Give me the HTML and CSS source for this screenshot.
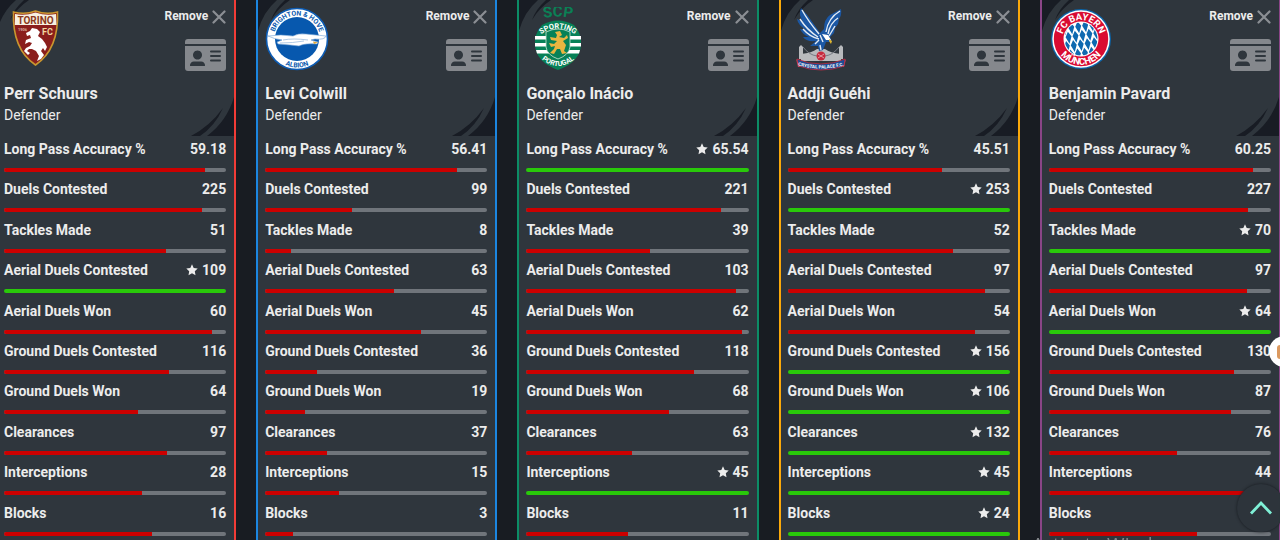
FILE: index.html
```html
<!DOCTYPE html>
<html lang="en">
<head>
<meta charset="utf-8">
<title>Player comparison</title>
<link rel="stylesheet" href="styles.css">
</head>
<body>
<svg width="0" height="0" class="defs" aria-hidden="true">
  <defs>
    <symbol id="close" viewBox="0 0 14 14"><path d="M1.500 1.500l11 11M12.500 1.500L1.500 12.500" fill="none" stroke="#8b8f94" stroke-width="2.200" stroke-linecap="round"/></symbol>
    <symbol id="idcard" viewBox="0 0 41 32">
      <path fill="#85888d" fill-rule="evenodd" d="M3 0H38a3 3 0 0 1 3 3V5H0V3A3 3 0 0 1 3 0ZM0 7H41V29a3 3 0 0 1-3 3H3a3 3 0 0 1-3-3ZM12.500 11.500a4.500 4.500 0 1 0 .01 0ZM5 27H20a4 4 0 0 0-4-4.500H9A4 4 0 0 0 5 27ZM26 11.500a1 1 0 0 0 0 2H35a1 1 0 0 0 0-2ZM26 16a1 1 0 0 0 0 2H35a1 1 0 0 0 0-2ZM26 20.500a1 1 0 0 0 0 2H35a1 1 0 0 0 0-2Z"/>
    </symbol>
    <symbol id="star" viewBox="0 0 12 12"><path fill="#ececec" d="M6 .3l1.700 3.600 4 .5-2.900 2.800.7 4L6 9.300l-3.500 1.900.7-4L.3 4.400l4-.5z"/></symbol>
    <symbol id="corner-tl" viewBox="0 0 40 40"><path fill="#181c24" d="M0 0H19Q5 12 0 31ZM27 0H32Q20 8 13 20Q17 9 27 0Z"/></symbol>
    <symbol id="corner-br" viewBox="0 0 44 40"><path fill="#181c24" d="M44 1V40H17Q37 25 44 1ZM33 12Q25 30 10 40H1Q20 30 33 12Z"/></symbol>

    <symbol id="torino" viewBox="0 0 64 64">
      <path d="M9.500 5Q21 8 31.500 4Q42 8 53.500 5Q55 42 31.500 58Q8 42 9.500 5Z" fill="#8a1e1c" stroke="#c9962f" stroke-width="1.600"/>
      <path d="M11 7Q21 9 31.500 5.500Q42 9 52 7L52.500 18H10.800Z" fill="#f7f0e0"/>
      <text x="31.500" y="17" text-anchor="middle" class="crest-text" font-size="10" fill="#8a3a1c">TORINO</text>
      <text x="43.500" y="28" text-anchor="middle" class="crest-text" font-size="9" fill="#f0d9a0">FC</text>
      <text x="18.500" y="24" text-anchor="middle" class="crest-text" font-size="4" fill="#d8b0a0">1906</text>
      <path fill="#fff" d="M26 24L28 21L33 22L36 25L34 29L38 32L41 36L43 40L41 44L39 41L37 44L40 48L37 52L33 54L35 49L32 44L28 42L25 42L23 44L26 46L24 48L20 44L22 41L26 39L28 36L25 35L21 37L22 33L27 31L26 28L23 29L22 26Z"/>
    </symbol>

    <symbol id="brighton" viewBox="0 0 64 64">
      <circle cx="32" cy="32" r="30.500" fill="#fff" stroke="#0d5cb4" stroke-width="1.600"/>
      <circle cx="32" cy="32" r="22" fill="#0758ae"/>
      <path id="br-top" d="M8.500 32a23.500 23.500 0 0 1 47 0" fill="none"/>
      <path id="br-bot" d="M3.500 32a28.500 28.500 0 0 0 57 0" fill="none"/>
      <text class="crest-text" font-size="6.800" fill="#0758ae" text-anchor="middle"><textPath href="#br-top" startOffset="50%">BRIGHTON &amp; HOVE</textPath></text>
      <text class="crest-text" font-size="6.800" fill="#0758ae" text-anchor="middle"><textPath href="#br-bot" startOffset="50%">ALBION</textPath></text>
      <path fill="#fff" stroke="#6fa0d4" stroke-width=".6" d="M3 29Q16 27 28 29Q33 26 41 27Q51 28 61 29Q60 33 50 32L46 33L53 35L52 37Q40 36 34 39L25 38L13 37L12 35L17 33Q9 32 3 29Z"/>
      <path fill="#e0a735" d="M48 34.500l5 1-4 1.500z"/>
      <path d="M18 33Q28 31 43 33M15 36Q28 36 39 34" fill="none" stroke="#8fb3da" stroke-width=".7"/>
    </symbol>

    <symbol id="sporting" viewBox="0 0 64 64">
      <path id="sp-scp" d="M12 12.500Q32 6.500 52 12.500" fill="none"/>
      <text class="crest-text" font-size="15" fill="#0b8055" text-anchor="middle"><textPath href="#sp-scp" startOffset="50%">SCP</textPath></text>
      <path fill="#078157" d="M16 18Q32 9 48 18Q56 27 55 38Q54 55 32 63Q10 55 9 38Q8 27 16 18Z"/>
      <path fill="#fff" d="M9 29H55V32.500H9ZM9 36H55V39.500H9ZM10 43H54L53 46.500H11Z"/>
      <path fill="#078157" stroke="#cce5d6" stroke-width=".8" d="M20 25Q32 19 44 25V40Q43 48 32 52Q21 48 20 40Z"/>
      <path fill="#e9b540" d="M29 25L34 24L36 28L33 30L38 31L41 28L42 31L37 34L40 38L38 44L41 46L36 47L34 42L31 42L28 47L24 46L28 42L29 39L25 40L23 36L28 37L31 34L25 33L24 30L30 31L31 28Z"/>
      <path id="sp-top" d="M14 28Q32 15 50 28" fill="none"/>
      <path id="sp-bot" d="M13 50Q32 68 51 50" fill="none"/>
      <text class="crest-text" font-size="7.500" fill="#fff" text-anchor="middle"><textPath href="#sp-top" startOffset="50%">SPORTING</textPath></text>
      <text class="crest-text" font-size="7" fill="#fff" text-anchor="middle"><textPath href="#sp-bot" startOffset="50%">PORTUGAL</textPath></text>
    </symbol>

    <symbol id="palace" viewBox="0 0 64 64">
      <path fill="#b8babd" d="M11 40L13 38L15 40V52H11ZM51 40L53 38L55 40V52H51ZM13 47Q24 46 29 42L37 42Q42 46 53 47V54H13Z"/>
      <path d="M15 40Q21 48 29 49M51 40Q45 48 37 49" fill="none" stroke="#777b84"/>
      <path fill="#1b57a4" d="M13 1Q20 8 25 16L32 26L36 22Q36 12 42 8L53 2Q54 8 51 12L50 17L47 21L46 26L42 30L44 35L38 35L35 43L31 44L30 39L22 39L28 34Q18 35 15 30L21 30Q14 27 12 22L18 23Q10 18 9 12L15 15Q10 7 13 1Z"/>
      <path d="M14 3Q20 14 31 27M12 12Q19 23 30 30M15 22Q22 30 31 32M52 4Q40 11 38 25M50 11Q42 16 40 27M47 19L41 29M32 28L35 35M32 38L33 43M27 37L31 33" fill="none" stroke="#e3ebf4" stroke-width="1.400"/>
      <path fill="#fff" d="M34 27L40 28L43 33L38 33Z"/><path fill="#e4b62b" d="M41 32l3 2-1 3-2-3z"/>
      <circle cx="33" cy="49" r="4.500" fill="#c7293d"/><path d="M30 47l6 4M36 47l-6 4" stroke="#eec2c7" stroke-width=".7"/>
      <path fill="#c94958" d="M8 52l2 8 5 0zM58 52l-2 8-5 0z"/>
      <path fill="#1b4c96" stroke="#c7293d" stroke-width=".8" d="M9 52Q20 57 33 57Q46 57 57 52L56 59Q45 63 33 63Q21 63 11 59Z"/>
      <path id="pa-rib" d="M9 58Q33 65 57 58" fill="none"/>
      <text class="crest-text" font-size="4.600" fill="#fff" text-anchor="middle"><textPath href="#pa-rib" startOffset="50%">CRYSTAL PALACE F.C.</textPath></text>
    </symbol>

    <symbol id="bayern" viewBox="0 0 64 64">
      <clipPath id="disc"><circle cx="32" cy="32" r="16.500"/></clipPath>
      <circle cx="32" cy="32" r="30" fill="#0b65aa"/>
      <circle cx="32" cy="32" r="28.700" fill="#fff"/>
      <circle cx="32" cy="32" r="27.200" fill="#d90b32"/>
      <circle cx="32" cy="32" r="17.500" fill="#fff"/>
      <g clip-path="url(#disc)"><g transform="rotate(-8 32 32)" fill="#0e69b0">
        <path d="M17 14l3 5-3 7-3-7zM24 14l3 5-3 7-3-7zM31 14l3 5-3 7-3-7zM38 14l3 5-3 7-3-7zM45 14l3 5-3 7-3-7zM20 23l3 5-3 7-3-7zM27 23l3 5-3 7-3-7zM34 23l3 5-3 7-3-7zM41 23l3 5-3 7-3-7zM48 23l3 5-3 7-3-7zM17 32l3 5-3 7-3-7zM24 32l3 5-3 7-3-7zM31 32l3 5-3 7-3-7zM38 32l3 5-3 7-3-7zM45 32l3 5-3 7-3-7zM20 41l3 5-3 7-3-7zM27 41l3 5-3 7-3-7zM34 41l3 5-3 7-3-7zM41 41l3 5-3 7-3-7z"/>
      </g></g>
      <path id="by-top" d="M13 32a19 19 0 0 1 38 0" fill="none"/>
      <path id="by-bot" d="M6.200 32a25.800 25.800 0 0 0 51.600 0" fill="none"/>
      <text class="crest-text" font-size="9.500" fill="#fff" text-anchor="middle"><textPath href="#by-top" startOffset="50%">FC BAYERN</textPath></text>
      <text class="crest-text" font-size="9.500" fill="#fff" text-anchor="middle"><textPath href="#by-bot" startOffset="50%">MÜNCHEN</textPath></text>
    </symbol>
  </defs>
</svg>

<main class="board" id="board"></main>

<button class="to-top" type="button" aria-label="Back to top"><svg viewBox="0 0 24 16" aria-hidden="true"><path d="M2 13.500L12 3L22 13.500" fill="none" stroke="#7ff0d6" stroke-width="2.800"/></svg></button>
<button class="helper" type="button" aria-label="Open helper"><span class="helper-face"></span></button>
<p class="watermark">Activate Windows</p>
<script src="app.js"></script>
</body>
</html>
```

FILE: styles.css
```css
* { box-sizing: border-box; }

body {
  margin: 0;
  background: #181c22;
  color: #ececec;
  font-family: Roboto, "Liberation Sans", sans-serif;
  font-size: 14px;
  overflow: hidden;
}

.defs { position: absolute; }
.crest-text { font-family: Roboto, "Liberation Sans", sans-serif; font-weight: 700; }

.board {
  display: grid;
  grid-template-columns: repeat(5, minmax(0, 1fr));
  gap: 20px;
  min-height: 100vh;
  margin: 0 -1px 0 -5px;
}

.card {
  display: flex;
  flex-direction: column;
  border: solid;
  border-width: 0 2px;
  background: #2f363d;
}
.card-red { border-color: #f23c37; }
.card-blue { border-color: #1c86e0; }
.card-green { border-color: #0c8c66; }
.card-amber { border-color: #fba90a; }
.card-purple { border-color: #8a4587; }

.card-head {
  position: relative;
  display: flex;
  flex-direction: column;
  height: 136px;
  padding: 7px 8px 0 7px;
}
.corner { position: absolute; }
.corner-tl { top: 0; left: 0; width: 40px; height: 40px; }
.corner-br { right: 0; bottom: 0; width: 44px; height: 40px; }

.head-row { position: relative; display: flex; justify-content: space-between; }
.crest { width: 64px; height: 64px; }
.actions { display: flex; flex-direction: column; align-items: flex-end; gap: 14px; }
.remove {
  display: flex;
  align-items: center;
  gap: 4px;
  padding: 1px 0 0;
  border: 0;
  background: none;
  color: inherit;
  font: 700 12px/17px Roboto, "Liberation Sans", sans-serif;
}
.remove svg { width: 14px; height: 14px; }
.profile { display: block; width: 41px; height: 32px; }
.profile svg { display: block; width: 100%; height: 100%; }

.name { position: relative; margin: 13px 0 0; font-size: 16px; line-height: 20px; font-weight: 700; }
.role { position: relative; margin: 1px 0 0; font-size: 14px; line-height: 20px; }

.stats {
  flex: 1;
  display: grid;
  grid-auto-rows: 1fr;
  margin: 0;
  padding: 0 8px 0 7px;
}
.stat {
  display: grid;
  grid-template-columns: 1fr auto;
  grid-template-rows: 26px 10px;
  font-weight: 700;
  line-height: 26px;
}
.stat dt, .stat dd { margin: 0; }
.stat .value { display: flex; align-items: center; gap: 4px; }
.star { width: 12px; height: 12px; }
.stat .track { grid-column: 1 / 3; align-self: end; height: 4px; border-radius: 2px; background: #70757b; overflow: hidden; }
.fill { height: 100%; background: #cc0000; }
.best .fill { background: #29c90a; }

.to-top {
  position: fixed;
  right: -5px;
  bottom: 8px;
  display: grid;
  place-items: center;
  width: 48px;
  height: 48px;
  padding: 0;
  border: 0;
  border-radius: 50%;
  background: #2d343b;
  box-shadow: 0 0 3px #15191e;
}
.to-top svg { width: 24px; height: 16px; }

.helper {
  position: fixed;
  right: -20px;
  top: 336px;
  display: flex;
  align-items: center;
  width: 31px;
  height: 31px;
  padding: 0 0 0 8px;
  border: 0;
  border-radius: 50%;
  background: #fff;
}
.helper-face { width: 14px; height: 14px; border-radius: 3px; background: #dc9a60; }

.watermark {
  position: fixed;
  left: 1032px;
  top: 532px;
  margin: 0;
  color: #83878b;
  font: 19px/24px "Open Sans", sans-serif;
  white-space: nowrap;
}
```

FILE: app.js
```js
const labels = ["Long Pass Accuracy %", "Duels Contested", "Tackles Made", "Aerial Duels Contested", "Aerial Duels Won",
  "Ground Duels Contested", "Ground Duels Won", "Clearances", "Interceptions", "Blocks"];

const players = [
  { name: "Perr Schuurs", crest: "torino", tone: "red", values: ["59.18", 225, 51, 109, 60, 116, 64, 97, 28, 16] },
  { name: "Levi Colwill", crest: "brighton", tone: "blue", values: ["56.41", 99, 8, 63, 45, 36, 19, 37, 15, 3] },
  { name: "Gonçalo Inácio", crest: "sporting", tone: "green", values: ["65.54", 221, 39, 103, 62, 118, 68, 63, 45, 11] },
  { name: "Addji Guéhi", crest: "palace", tone: "amber", values: ["45.51", 253, 52, 97, 54, 156, 106, 132, 45, 24] },
  { name: "Benjamin Pavard", crest: "bayern", tone: "purple", values: ["60.25", 227, 70, 97, 64, 130, 87, 76, 44, 16] }
];

const best = labels.map((_, i) => Math.max(...players.map(p => Number(p.values[i]))));
const icon = (id, cls) => `<svg class="${cls}" aria-hidden="true"><use href="#${id}"/></svg>`;

function statRow(label, value, i, hideValue) {
  const share = Number(value) / best[i] * 100;
  const top = share === 100;
  return `<div class="stat ${top ? "best" : ""}"><dt>${label}</dt>
    <dd class="value">${top ? icon("star", "star") : ""}${hideValue ? "" : value}</dd>
    <dd class="track"><div class="fill" style="width:${share.toFixed(1)}%"></div></dd></div>`;
}

document.getElementById("board").innerHTML = players.map(p => `
  <article class="card card-${p.tone}">
    <header class="card-head">
      ${icon("corner-tl", "corner corner-tl")}${icon("corner-br", "corner corner-br")}
      <div class="head-row">
        ${icon(p.crest, "crest")}
        <div class="actions">
          <button class="remove" type="button">Remove ${icon("close", "x")}</button>
          <a class="profile" href="#" aria-label="Profile of ${p.name}">${icon("idcard", "card-icon")}</a>
        </div>
      </div>
      <h2 class="name">${p.name}</h2>
      <p class="role">Defender</p>
    </header>
    <dl class="stats">${p.values.map((v, i) => statRow(labels[i], v, i, p.crest === "bayern" && i === 9)).join("")}</dl>
  </article>`).join("");
```
